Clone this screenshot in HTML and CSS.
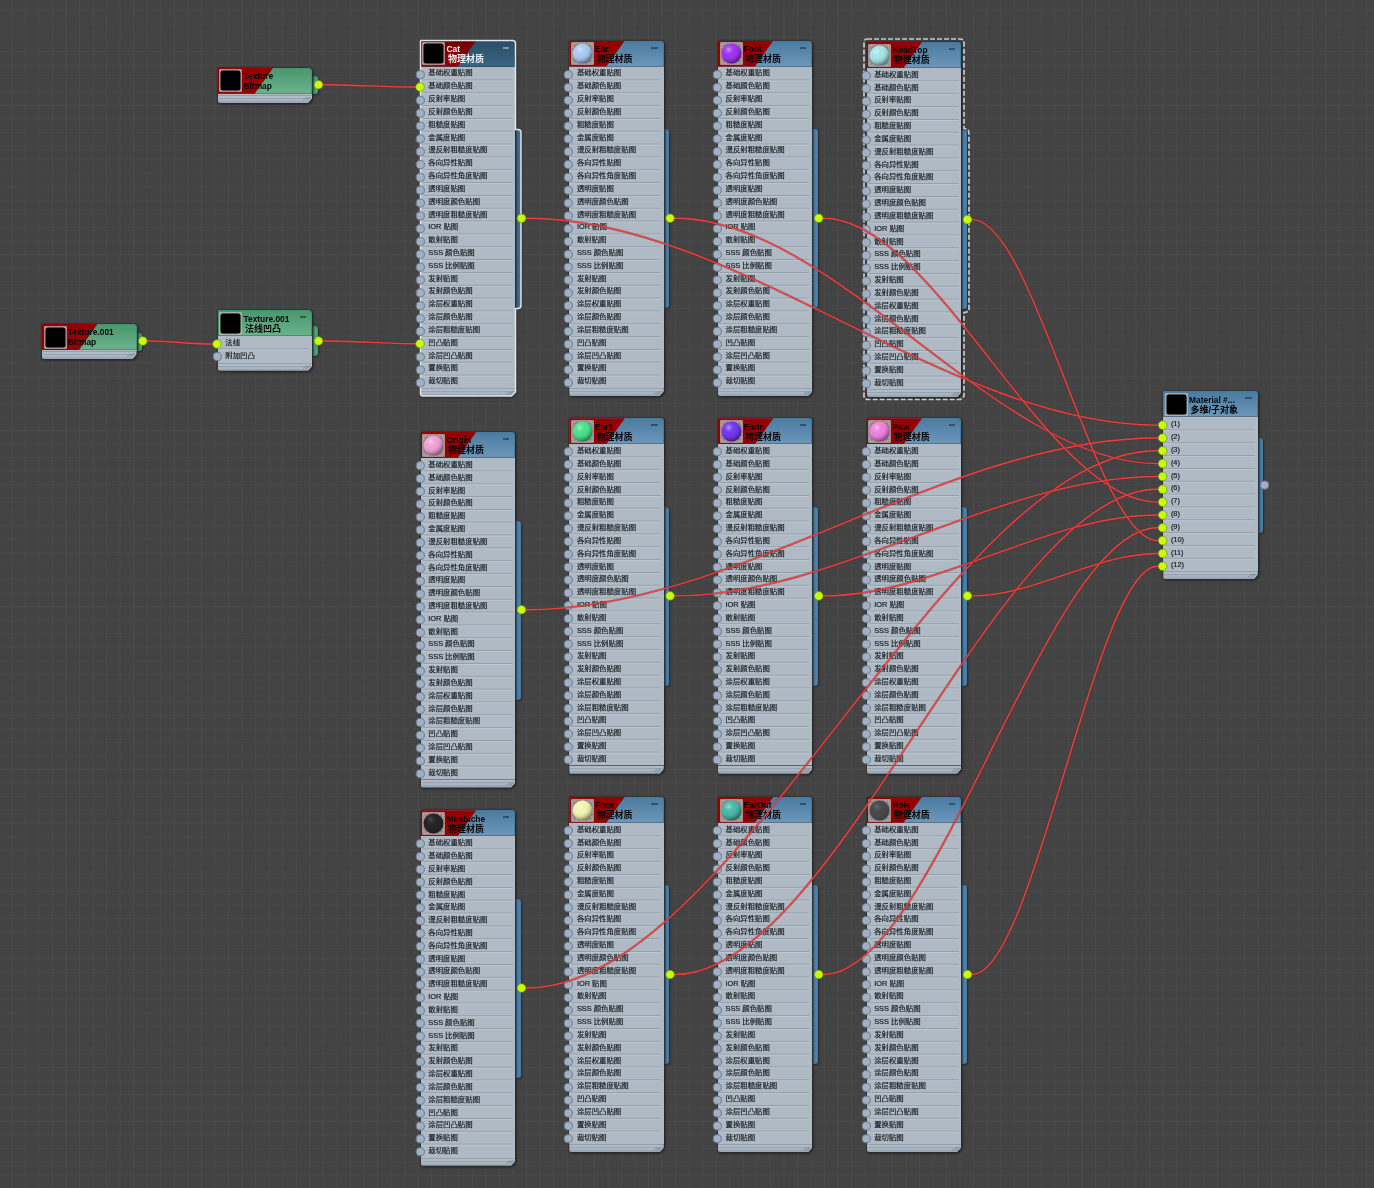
FILE: index.html
```html
<!DOCTYPE html>
<html lang="zh-CN">
<head>
<meta charset="utf-8">
<title>Material graph</title>
<link rel="stylesheet" href="styles.css">
</head>
<body>
<main class="canvas" id="canvas"></main>
<script src="graph.js"></script>
</body>
</html>
```
FILE: styles.css
```css
* { box-sizing: border-box; }
body { margin: 0; background: #434343; }
.canvas {
  position: relative;
  width: 1374px;
  height: 1188px;
  overflow: hidden;
  font-family: "Liberation Sans", "Noto Sans CJK SC", sans-serif;
  background-color: #434343;
  background-image:
    linear-gradient(90deg, #494949 1px, transparent 1px),
    linear-gradient(#494949 1px, transparent 1px);
  background-size: 13.55px 13.55px;
  background-position: 11.3px 10.2px;
}
.node { position: absolute; width: 94.5px; }
.body {
  position: relative;
  height: 100%;
  display: flex;
  flex-direction: column;
  filter: drop-shadow(0 0 1px #1d242b) drop-shadow(1px 1px 1px #252525);
}
.header {
  position: relative;
  flex: none;
  height: 26px;
  display: flex;
  padding: 0.8px;
  border: 1px solid #477ba0;
  border-bottom-color: #57728a;
  border-radius: 1px 3px 0 0;
  background: linear-gradient(#4a7ca2, #6c96b8);
}
.green .header { border-color: #419568; background: linear-gradient(#4a986d, #6bb28b); }
.active .header { border-color: #2d526a; background: linear-gradient(#2b4e67, #3a6481); }
.red .header::before {
  content: "";
  position: absolute;
  inset: -1px;
  background: #960000;
  clip-path: polygon(0 0, 55.5px 0, 37px 100%, 0 100%);
}
.active .header::before { background: linear-gradient(#700000, #9c0000); }
.thumb { position: relative; flex: none; width: 23px; height: 23px; }
.titles { position: relative; flex: none; width: 67px; padding-left: 1px; white-space: nowrap; font-weight: bold; color: #050607; }
.name { font-size: 8.4px; line-height: 10px; padding-top: 1.6px; }
.kind { font-size: 9px; line-height: 10.5px; padding-left: 1.4px; }
.kind.latin { font-size: 8.4px; line-height: 11.5px; padding-left: 0; }
.active .titles { color: #eef2f5; }
.collapse { position: absolute; left: 81px; top: 5px; width: 6.5px; height: 2px; background: #2b5270; }
.green .collapse { background: #2a6144; }
.active .collapse { background: #7d97a9; }
.rows { flex: 1; min-height: 0; background: #afbac4; padding-top: 0.9px; }
.row {
  height: 12.835px;
  padding: 0 3px 0 7.6px;
  font-size: 7.4px;
  line-height: 12.8px;
  white-space: nowrap;
  color: #11161b;
  -webkit-text-stroke: 0.15px #11161b;
}
.footer {
  flex: none;
  height: 8.3px;
  background: linear-gradient(#94a0ab 0 1px, #b0bbc6 1px 3px, #98a5b0 3px 4px, #a9b6c1 4px 6px, #9aa8b5 6px);
  border-radius: 0 0 0 2px;
  clip-path: polygon(0 0, 100% 0, 100% 45%, calc(100% - 4px) 100%, 0 100%);
}
.tab { position: absolute; left: 94px; width: 6px; background: #4c84b0; border: 1px solid #427aa3; border-left: 0; border-radius: 0 3px 3px 0; box-shadow: 0 0 1px #26323c, 1px 1px 2px #292929; }
.green .tab { background: #4da476; border-color: #46966b; }
.active .tab { background: #416f8e; }
.overlay { position: absolute; left: 0; top: 0; width: 100%; height: 100%; overflow: visible; }
.wires { position: absolute; left: 0; top: 0; pointer-events: none; }
.rule-dark { stroke: #8c98a4; stroke-width: .9; }
.rule-light { stroke: #c0cad3; stroke-width: .8; }
.socket { fill: #a2b0c4; stroke: #68788c; stroke-width: 1; }
.live { fill: #c8ff00; stroke: #6f8c24; stroke-width: .7; }
.grip { stroke: #6e7a86; stroke-width: .6; }
.wire-shadow { fill: none; stroke: #6b1d1d; stroke-opacity: .4; stroke-width: 2.4; }
.wire { fill: none; stroke: #f03e3e; stroke-width: 1.4; }
.outline { fill: none; stroke: #e1e5e7; stroke-width: 1.5; }
.outline-dashed { fill: none; stroke: #c9c9c9; stroke-width: 1.7; stroke-dasharray: 5 2; }
```
FILE: graph.js
```javascript
const physicalRows = ['基础权重贴图', '基础颜色贴图', '反射率贴图', '反射颜色贴图', '粗糙度贴图',
  '金属度贴图', '漫反射粗糙度贴图', '各向异性贴图', '各向异性角度贴图', '透明度贴图',
  '透明度颜色贴图', '透明度粗糙度贴图', 'IOR 贴图', '散射贴图', 'SSS 颜色贴图', 'SSS 比例贴图',
  '发射贴图', '发射颜色贴图', '涂层权重贴图', '涂层颜色贴图', '涂层粗糙度贴图', '凹凸贴图',
  '涂层凹凸贴图', '置换贴图', '裁切贴图'];
const PITCH = 12.835;
const physical = (name, x, y, ball, cls = 'red') => ({
  name, x, y, ball, cls, kind: '物理材质', rows: physicalRows, h: 355.5, tab: [88.5, 267.5], out: 177.7
});

const nodes = [
  { name: 'Texture', kind: 'Bitmap', x: 217.7, y: 67.7, cls: 'green red', rows: [], h: 34, tab: [8.5, 26.5], out: 17 },
  { name: 'Texture.001', kind: 'Bitmap', x: 42, y: 324, cls: 'green red', rows: [], h: 34.3, tab: [8.5, 26.5], out: 17 },
  { name: 'Texture.001', kind: '法线凹凸', x: 217.7, y: 310.3, cls: 'green', rows: ['法线', '附加凹凸'], h: 60.5, tab: [15.5, 46], out: 30.7, menu: true },
  physical('Cat', 420.7, 40.5, null, 'red active'),
  physical('Ear', 569.3, 40.5, '#a9c9ee'),
  physical('Foot', 717.9, 40.5, '#9c35f0'),
  physical('HeadTop', 866.6, 41.9, '#a5e3e4', 'red dashed'),
  physical('Origin', 420.7, 432, '#eda0d6'),
  physical('Ear1', 569.3, 418.2, '#4be08a'),
  physical('EarIn', 717.9, 418.2, '#7338f0'),
  physical('Paw', 866.6, 418.2, '#ee82dd'),
  physical('Mustache', 420.7, 810.3, '#242424'),
  physical('Face', 569.3, 796.8, '#f0f4b0'),
  physical('EarOut', 717.9, 796.8, '#48b9a7'),
  physical('Hole', 866.6, 796.8, '#494949'),
  { name: 'Material #...', kind: '多维/子对象', x: 1163.3, y: 391.4, cls: '', h: 188,
    rows: Array.from({ length: 12 }, (_, i) => `(${i + 1})`), tab: [47, 142], out: 93.7, menu: true }
];

// [source node, target node, target row]
const links = [[0, 3, 1], [1, 2, 0], [2, 3, 21], [3, 15, 0], [7, 15, 1], [11, 15, 2], [4, 15, 3],
  [8, 15, 4], [12, 15, 5], [5, 15, 6], [9, 15, 7], [13, 15, 8], [6, 15, 9], [10, 15, 10], [14, 15, 11]];

const inY = i => 33.7 + i * PITCH;

function thumb(n, id) {
  const dark = n.ball === '#242424' || n.ball === '#494949';
  const inner = n.ball
    ? `<defs><radialGradient id="g${id}" cx=".36" cy=".3" r=".72"><stop offset="0" stop-color="#fff" stop-opacity=".5"/><stop offset=".45" stop-color="${n.ball}" stop-opacity="0"/><stop offset="1" stop-color="#000" stop-opacity=".5"/></radialGradient></defs>
       <rect x="1.5" y="1.5" width="20" height="20" fill="#828383"/>
       <path d="M2 6V2H6M17 2H21V6M21 17V21H17M6 21H2V17" fill="none" stroke="#c1c1bd" stroke-dasharray="1.5 1"/>
       <circle cx="11.5" cy="11.5" r="9.9" fill="${n.ball}"/><circle cx="11.5" cy="11.5" r="9.9" fill="url(#g${id})" ${dark ? 'opacity=".35"' : ''}/>`
    : '<rect x="1.5" y="1.5" width="20" height="20" rx="2.5" fill="#000"/>';
  return `<svg class="thumb" viewBox="0 0 23 23"><rect x=".8" y=".8" width="21.4" height="21.4" fill="#929292" stroke="#bdbab8"/>${inner}</svg>`;
}

function outline(n) {
  const [a, b] = n.tab;
  if (n.cls.includes('active'))
    return `<path class="outline" d="M0 -.5H91.500Q94.500 -.5 94.500 2.5V${a}H97Q100 ${a} 100 ${a + 3}V${b - 3}Q100 ${b} 97 ${b}H94.500V351L90.500 355H2Q-.5 355 -.5 352.500V0Z"/>`;
  if (n.cls.includes('dashed'))
    return `<path class="outline-dashed" d="M0 -3H93Q97 -3 97 1V${a - 2}Q102.500 ${a - 2} 102 ${a + 4}V${b - 1}Q102 ${b + 3} 97 ${b + 3}V354Q95 357.500 92 357.500H1Q-3 357.500 -3 354V0Q-3 -3 0 -3Z"/>`;
  return '';
}

const linked = new Set(links.map(l => `${l[1]}-${l[2]}`));
let html = '';
nodes.forEach((n, i) => {
  const rows = n.rows.map(r => `<div class="row">${r}</div>`).join('');
  const sockets = n.rows.map((_, r) => linked.has(`${i}-${r}`) ? '' : `<circle class="socket" cx="-.7" cy="${inY(r)}" r="4.1"/>`).join('');
  const rules = n.rows.slice(1).map((_, r) => {
    const y = 39 + r * PITCH;
    return `<path class="rule-dark" d="M2 ${y}H91.500"/><path class="rule-light" d="M2 ${y + .9}H91.500"/>`;
  }).join('');
  const menu = n.menu || n.rows === physicalRows ? '<i class="collapse"></i>' : '';
  const latin = n.kind === 'Bitmap' ? ' latin' : '';
  html += `<section class="node ${n.cls}" style="left:${n.x}px;top:${n.y}px;height:${n.h}px">
    <div class="tab" style="top:${n.tab[0]}px;height:${n.tab[1] - n.tab[0]}px"></div>
    <div class="body">
      <div class="header">${thumb(n, i)}<div class="titles"><div class="name">${n.name}</div><div class="kind${latin}">${n.kind}</div></div>${menu}</div>
      <div class="rows">${rows}</div><div class="footer"></div>
    </div>
    <svg class="overlay">${rules}${outline(n)}${sockets}<path class="grip" d="M85 ${n.h - 2}l4-3M87.500 ${n.h - 2}l4-3M89.500 ${n.h - 2}l3-3"/></svg>
  </section>`;
});

let paths = '', dots = '';
links.forEach(([s, t, r]) => {
  const x1 = nodes[s].x + 100.8, y1 = nodes[s].y + nodes[s].out;
  const x2 = nodes[t].x - .7, y2 = nodes[t].y + inY(r);
  const a = x1 + 5, b = x2 - 5, c = (b - a) / 3;
  const d = `M${x1} ${y1}H${a}C${a + c} ${y1} ${b - c} ${y2} ${b} ${y2}H${x2}`;
  paths += `<path class="wire-shadow" d="${d}"/><path class="wire" d="${d}"/>`;
  dots += `<circle class="live" cx="${x1}" cy="${y1}" r="4.3"/><circle class="live" cx="${x2}" cy="${y2}" r="4.3"/>`;
});
html += `<svg class="wires" width="1374" height="1188">${paths}${dots}<circle class="socket" cx="1264.6" cy="485.1" r="4.1"/></svg>`;
document.getElementById('canvas').innerHTML = html;
```
